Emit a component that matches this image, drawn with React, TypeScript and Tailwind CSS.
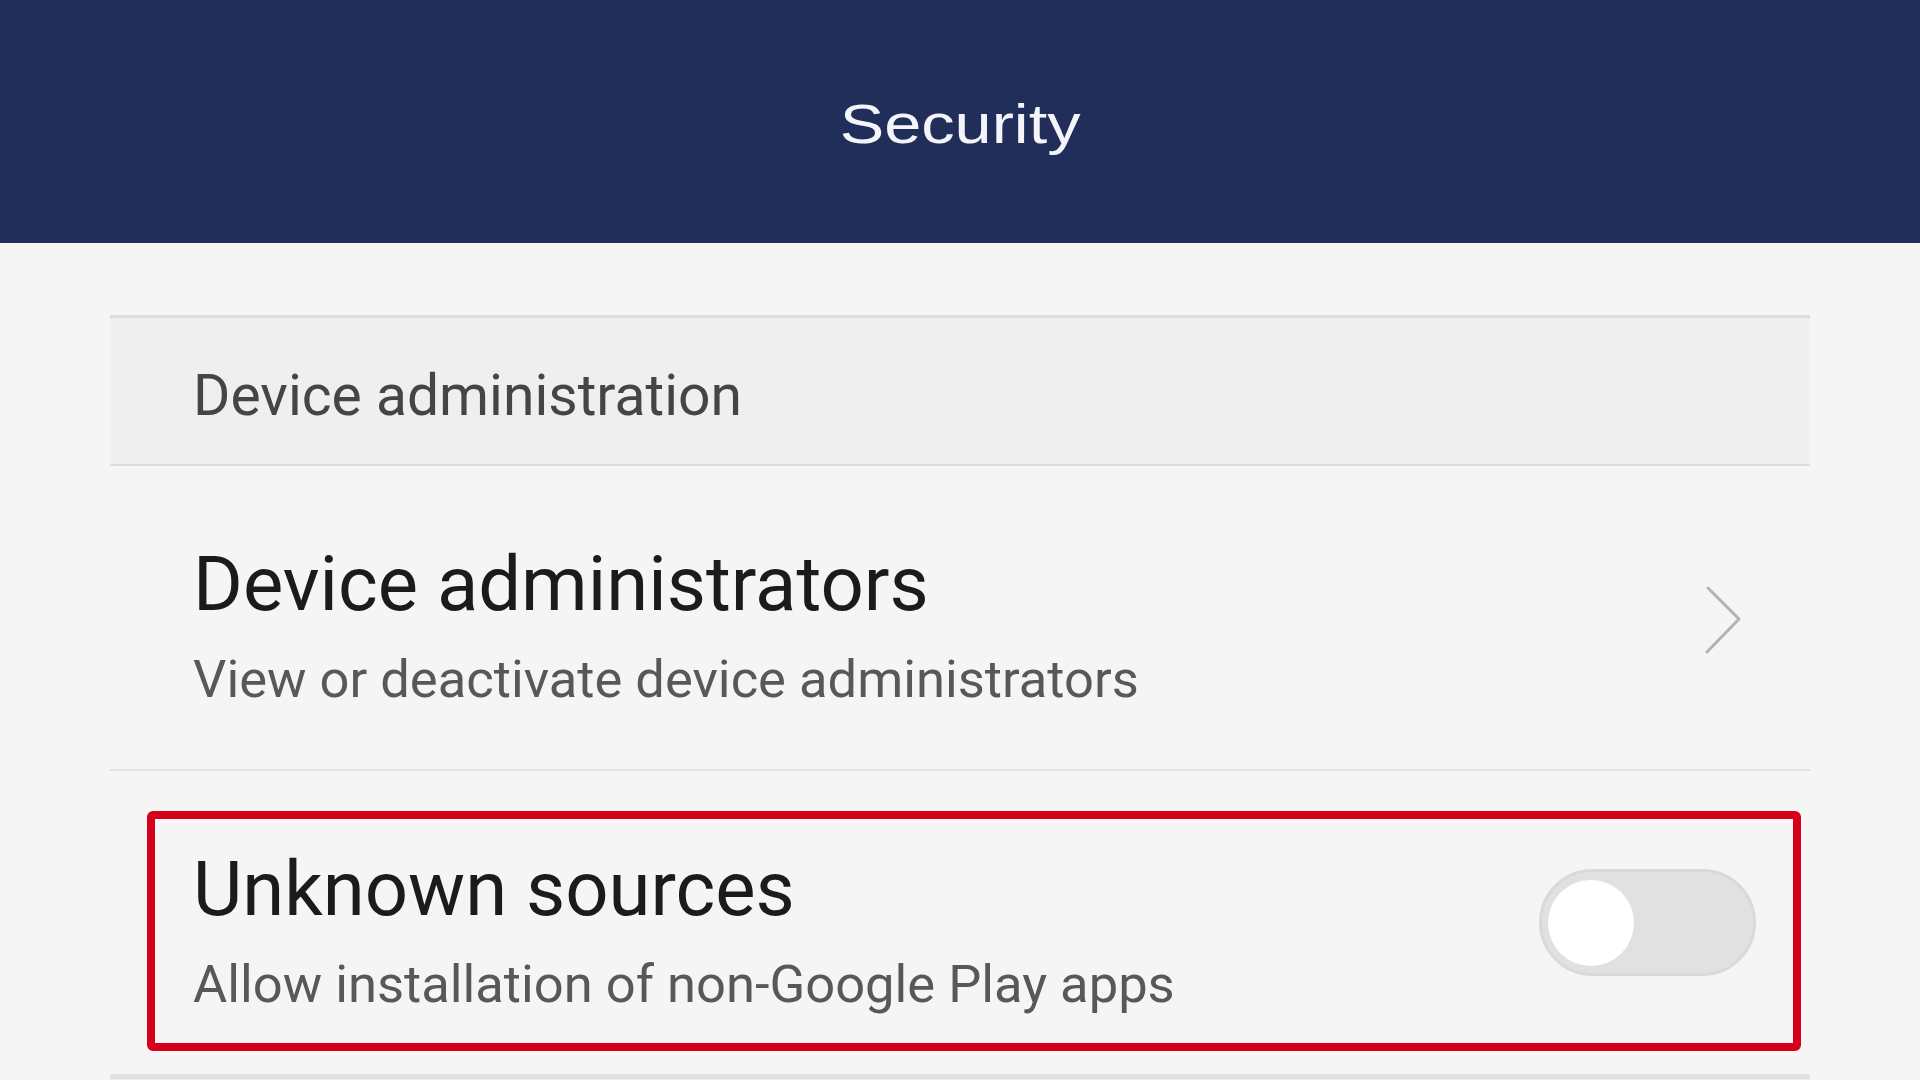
import React from 'react'

const font = { fontFamily: 'Roboto, "Noto Sans", Arial, sans-serif' }

function Chevron() {
  return (
    <svg width={40} height={70} viewBox="0 0 40 70" fill="none" className="shrink-0">
      <path d="M5 4 L36 35 L4 68" stroke="#b3b3b3" strokeWidth={3} strokeLinecap="round" strokeLinejoin="round" />
    </svg>
  )
}

function Toggle({ on = false }: { on?: boolean }) {
  return (
    <div className="relative flex h-[107px] w-[217px] shrink-0 items-center rounded-full border-[3px] border-[#d9d9d9] bg-[#e1e1e1] px-[6px]">
      <div className={`h-[86px] w-[86px] rounded-full bg-white ${on ? 'ml-auto' : ''}`} />
    </div>
  )
}

function SettingRow({
  title,
  subtitle,
  right,
  highlight = false,
}: {
  title: string
  subtitle: string
  right: React.ReactNode
  highlight?: boolean
}) {
  return (
    <div className="relative flex h-[305px] items-start border-b-2 border-[#e3e3e3] pl-[83px] pr-[54px]">
      <div className="flex flex-1 flex-col pt-[80px]">
        <span className="text-[76px] leading-[76px] text-[#1b1b1b]">{title}</span>
        <span className="mt-[31px] text-[52.5px] leading-[53px] text-[#585858]">{subtitle}</span>
      </div>
      <div className="self-center">{right}</div>
      {highlight && (
        <div className="pointer-events-none absolute top-[40px] right-[9px] bottom-[23px] left-[37px] rounded-[6px] border-[8px] border-[#d7001a]" />
      )}
    </div>
  )
}

export default function App() {
  return (
    <div className="flex h-[1080px] w-[1920px] flex-col overflow-hidden bg-[#f5f5f5]" style={font}>
      {/* Title bar */}
      <header className="flex h-[243px] shrink-0 items-center justify-center bg-[#212e5a] pt-[4px]">
        <h1
          className="scale-x-[1.19] text-[56px] leading-[56px] font-normal text-[#f3f5fb]"
          style={{ fontFamily: '"Liberation Sans", Arial, sans-serif' }}
        >
          Security
        </h1>
      </header>

      <div className="mx-[110px] flex flex-1 flex-col pt-[72px]">
        {/* Section header */}
        <div className="flex h-[151px] shrink-0 items-center border-t-[3px] border-b-2 border-[#dcdcdc] bg-[#efefef] pt-[8px] pl-[83px]">
          <span className="text-[57px] leading-[57px] text-[#454545]">Device administration</span>
        </div>

        <SettingRow
          title="Device administrators"
          subtitle="View or deactivate device administrators"
          right={
            <div className="mt-[3px] mr-[13px]">
              <Chevron />
            </div>
          }
        />

        <SettingRow
          title="Unknown sources"
          subtitle="Allow installation of non-Google Play apps"
          right={<Toggle />}
          highlight
        />

        <div className="flex-1 border-t-[3px] border-[#e0e0e0] bg-[#efefef]" />
      </div>
    </div>
  )
}
